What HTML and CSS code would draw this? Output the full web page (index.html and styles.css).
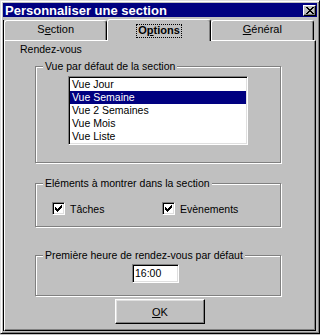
FILE: index.html
```html
<!DOCTYPE html>
<html lang="fr">
<head>
    <meta charset="UTF-8">
    <title>Personnaliser une section</title>
    <link rel="stylesheet" href="styles.css">
</head>
<body>
    <div class="window">
        <div class="titlebar">
            <span class="title">Personnaliser une section</span>
            <span class="close-btn">
                <svg width="8" height="7" viewBox="0 0 8 7" shape-rendering="crispEdges"><path d="M0 0h2v1H0z M6 0h2v1H6z M1 1h2v1H1z M5 1h2v1H5z M2 2h4v1H2z M3 3h2v1H3z M2 4h4v1H2z M1 5h2v1H1z M5 5h2v1H5z M0 6h2v1H0z M6 6h2v1H6z" fill="#000"/></svg>
            </span>
        </div>
        <div class="client">
            <div class="tabs">
                <div class="tab">S<u>e</u>ction</div>
                <div class="tab tab-active"><span class="focus">O<u>p</u>tions</span></div>
                <div class="tab"><u>G</u>énéral</div>
            </div>
            <div class="panel">
                <div class="section-label">Rendez-vous</div>

                <div class="group group-view">
                    <div class="group-title"><span>Vue par défaut de la section</span></div>
                    <ul class="listbox">
                        <li>Vue Jour</li>
                        <li class="selected">Vue Semaine</li>
                        <li>Vue 2 Semaines</li>
                        <li>Vue Mois</li>
                        <li>Vue Liste</li>
                    </ul>
                </div>

                <div class="group group-items">
                    <div class="group-title"><span>Eléments à montrer dans la section</span></div>
                    <div class="checks">
                        <div class="check">
                            <span class="checkbox"><svg width="7" height="7" viewBox="0 0 7 7" shape-rendering="crispEdges"><path d="M6 0h1v1H6z M5 1h2v1H5z M0 2h1v1H0z M4 2h3v1H4z M0 3h2v1H0z M3 3h3v1H3z M0 4h5v1H0z M1 5h3v1H1z M2 6h1v1H2z" fill="#000"/></svg></span>
                            <span>Tâches</span>
                        </div>
                        <div class="check">
                            <span class="checkbox"><svg width="7" height="7" viewBox="0 0 7 7" shape-rendering="crispEdges"><path d="M6 0h1v1H6z M5 1h2v1H5z M0 2h1v1H0z M4 2h3v1H4z M0 3h2v1H0z M3 3h3v1H3z M0 4h5v1H0z M1 5h3v1H1z M2 6h1v1H2z" fill="#000"/></svg></span>
                            <span>Evènements</span>
                        </div>
                    </div>
                </div>

                <div class="group group-hour">
                    <div class="group-title"><span>Première heure de rendez-vous par défaut</span></div>
                    <div class="textbox">16:00</div>
                </div>

                <button class="btn"><u>O</u>K</button>
            </div>
        </div>
    </div>
</body>
</html>
```

FILE: styles.css
```css
*{
    margin:0;
    padding:0;
    box-sizing:border-box;
}
body{
    background:#c0c0c0;
    font-family:"Liberation Sans", Arial, sans-serif;
    font-size:10.5px;
    color:#000;
}
.window{
    width:320px;
    height:334px;
    border:1px solid;
    border-color:#dfdfdf #000 #000 #dfdfdf;
    box-shadow:inset 1px 1px #fff, inset -1px -1px #808080;
    padding:2px;
    display:flex;
    flex-direction:column;
}
/* barre de titre */
.titlebar{
    height:14px;
    background:#000080;
    color:#fff;
    display:flex;
    align-items:center;
    justify-content:space-between;
    padding:0 1px 0 2px;
}
.title{
    font-weight:bold;
    font-size:13px;
    line-height:14px;
    padding-top:1px;
}
.close-btn{
    width:13px;
    height:11px;
    background:#c0c0c0;
    border:1px solid;
    border-color:#fff #000 #000 #fff;
    box-shadow:inset -1px -1px #808080;
    display:flex;
    align-items:center;
    justify-content:center;
}
.client{
    flex:1;
    margin-top:3px;
    border-left:1px solid #000;
    display:flex;
    flex-direction:column;
}
/* onglets */
.tabs{
    height:20px;
    display:flex;
    align-items:flex-end;
    padding-right:3px;
}
.tab{
    flex:1;
    height:20px;
    border:1px solid;
    border-bottom:0;
    border-color:#fff #000 #000 #fff;
    border-radius:3px 3px 0 0;
    box-shadow:inset -1px 0 #808080;
    text-align:center;
    font-size:11px;
    line-height:13px;
    padding-top:2px;
}
.tab-active{
    height:22px;
    margin-bottom:-1px;
    position:relative;
    z-index:1;
    background:#c0c0c0;
    padding-top:4px;
    font-weight:bold;
}
.focus{
    display:inline-block;
    height:14px;
    line-height:9px;
    padding:1px 1px 0;
    border:1px dotted #000;
}
/* panneau */
.panel{
    flex:1;
    margin-right:1px;
    border:1px solid;
    border-color:#fff #000 #000 #fff;
    box-shadow:inset -1px -1px #808080;
    display:flex;
    flex-direction:column;
}
.section-label{
    margin:2px 0 0 15px;
    line-height:13px;
}
.group{
    width:246px;
    margin-left:30px;
    border:1px solid #808080;
    box-shadow:1px 1px #fff, inset 1px 1px #fff;
}
.group-title{
    margin-top:-7px;
    padding-left:7px;
    line-height:13px;
}
.group-title span{
    background:#c0c0c0;
    padding:0 2px;
}
.group-view{
    margin-top:10px;
    padding-bottom:17px;
}
.group-items{
    margin-top:20px;
    padding-bottom:11px;
}
.group-hour{
    margin-top:28px;
    padding-bottom:12px;
}
/* liste */
.listbox{
    list-style:none;
    width:180px;
    margin:3px auto 0;
    background:#fff;
    border:1px solid;
    border-color:#808080 #fff #fff #808080;
    box-shadow:inset 1px 1px #000, inset -1px -1px #dfdfdf;
    padding:1px;
}
.listbox li{
    height:13px;
    line-height:13px;
    padding-left:2px;
}
.listbox .selected{
    background:#000080;
    color:#fff;
}
/* cases a cocher */
.checks{
    display:grid;
    grid-template-columns:110px auto;
    margin-top:12px;
    padding-left:16px;
}
.check{
    display:flex;
    align-items:center;
    gap:5px;
    line-height:12px;
}
.checkbox{
    width:13px;
    height:13px;
    background:#fff;
    border:1px solid;
    border-color:#808080 #fff #fff #808080;
    box-shadow:inset 1px 1px #000, inset -1px -1px #dfdfdf;
    display:flex;
    align-items:center;
    justify-content:center;
}
/* champ heure */
.textbox{
    width:47px;
    height:19px;
    margin:2px 0 0 96px;
    background:#fff;
    border:1px solid;
    border-color:#808080 #fff #fff #808080;
    box-shadow:inset 1px 1px #000, inset -1px -1px #dfdfdf;
    padding:0 2px;
    line-height:17px;
}
.btn{
    width:90px;
    height:25px;
    margin:3px auto 0;
    font:inherit;
    font-size:11px;
    color:#000;
    background:#c0c0c0;
    border:1px solid;
    border-color:#fff #000 #000 #fff;
    box-shadow:inset -1px -1px #808080, inset 1px 1px #dfdfdf;
}
```
